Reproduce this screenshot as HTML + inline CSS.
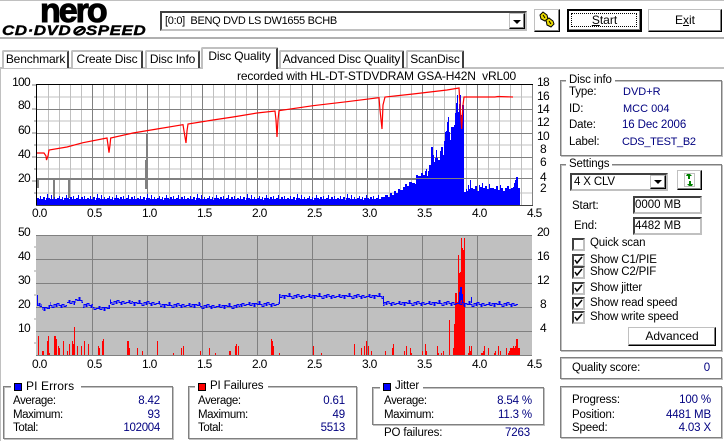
<!DOCTYPE html>
<html><head><meta charset="utf-8"><style>
html,body{margin:0;padding:0;background:#fff}
body{position:relative;width:724px;height:441px;overflow:hidden;font:11.5px/14px "Liberation Sans",sans-serif;letter-spacing:-.15px;color:#000}
.t{position:absolute;white-space:pre;height:14px;line-height:14px}
.a{font-size:12px;letter-spacing:-.7px}
.r{text-align:right}
.n{color:#000080}
.b{position:absolute;box-sizing:border-box}
.g{position:absolute;box-sizing:border-box;border:1px solid #808080;box-shadow:inset 1px 1px 0 #c0c0c0,1px 1px 0 #c0c0c0}
.lg{background:#fff;padding:0 3px}
.btn{position:absolute;box-sizing:border-box;background:#fff;border:1px solid;border-color:#c0c0c0 #000 #000 #c0c0c0;box-shadow:inset -1px -1px 0 #808080;text-align:center;font-size:12px;letter-spacing:0}
.in{position:absolute;box-sizing:border-box;background:#fff;border:2px solid;border-color:#404040 #c0c0c0 #c0c0c0 #404040}
.tab{position:absolute;box-sizing:border-box;background:#fff;border:2px solid #c0c0c0;border-bottom:0;border-right:2px solid #404040;border-radius:2px 2px 0 0;text-align:center;line-height:15px;font-size:12px;letter-spacing:-.15px}
.cb{position:absolute;box-sizing:border-box;width:13px;height:13px;background:#fff;border:2px solid;border-color:#404040 #c0c0c0 #c0c0c0 #404040}
svg{position:absolute}
</style></head><body>
<div class="b" style="left:0;top:0;width:724px;height:1px;background:#c0c0c0"></div>
<div class="b" style="left:0;top:37px;width:724px;height:2px;background:#b0b0b0"></div>
<div class="b" style="left:0;top:67px;width:724px;height:2px;background:#c0c0c0"></div>
<div class="b" style="left:0;top:67px;width:1px;height:374px;background:#c0c0c0"></div>

<div class="t" style="left:40px;top:-1px;height:24px;line-height:24px;font-size:34px;font-weight:bold;letter-spacing:-2px;-webkit-text-stroke:1px #000;color:#000">nero</div>
<div class="t" style="left:2px;top:24px;height:13px;line-height:13px;font-size:13.5px;font-weight:bold;font-style:italic;letter-spacing:.4px;-webkit-text-stroke:.4px #000;transform:scaleX(1.26);transform-origin:0 0">CD·DVD⊘SPEED</div>

<div class="in" style="left:160px;top:11px;width:367px;height:20px"></div>
<div class="t" style="left:165px;top:14px;font-size:11px;letter-spacing:-.3px">[0:0]  BENQ DVD LS DW1655 BCHB</div>
<div class="btn" style="left:509px;top:13px;width:16px;height:16px"></div>
<svg style="left:509px;top:13px" width="16" height="16"><path d="M4 7H12L8 11Z" fill="#000"/></svg>
<div class="btn" style="left:534px;top:9px;width:26px;height:23px"></div>
<svg style="left:534px;top:9px" width="26" height="23"><g fill="#e8d800" stroke="#000" stroke-width="1"><path d="M6 6l3-3 4 3 1 4-3 2-4-2z"/><path d="M12 11l3-2 4 3 1 3-3 3-4-2z"/></g><path d="M9 6l2 3M15 12l2 3" stroke="#000"/></svg>
<div class="btn" style="left:567px;top:9px;width:75px;height:23px;border:2px solid #000;line-height:18px"><div style="position:absolute;left:2px;top:2px;right:3px;bottom:3px;border:1px dotted #000"></div><span style="position:relative;top:0"><u>S</u>tart</span></div>
<div class="btn" style="left:648px;top:9px;width:74px;height:23px;line-height:20px">E<u>x</u>it</div>

<div class="tab" style="left:2px;top:50px;width:67px;height:18px">Benchmark</div>
<div class="tab" style="left:71px;top:50px;width:72px;height:18px">Create Disc</div>
<div class="tab" style="left:145px;top:50px;width:55px;height:18px">Disc Info</div>
<div class="tab" style="left:201px;top:47px;width:77px;height:22px;z-index:2">Disc Quality</div>
<div class="tab" style="left:279px;top:50px;width:125px;height:18px">Advanced Disc Quality</div>
<div class="tab" style="left:406px;top:50px;width:58px;height:18px">ScanDisc</div>

<div class="t" style="left:237px;top:69px;font-size:12px;letter-spacing:-.16px">recorded with HL-DT-STDVDRAM GSA-H42N  vRL00</div>

<svg style="left:0;top:0" width="724" height="441" shape-rendering="crispEdges">
<defs>
<pattern id="nz" patternUnits="userSpaceOnUse" x="37" y="193" width="50" height="13"><path fill="#0000ff" d="M0 13V5H2V6H3V3H4V6H6V4H8V7H9V5H10V1H11V5H13V6H14V2H15V6H17V4H18V6H20V5H22V3H23V6H25V4H26V7H27V5H29V2H30V5H32V6H33V4H35V6H36V3H37V6H39V5H41V2H42V6H44V4H46V6H47V3H48V6H50V13Z"/></pattern>
<pattern id="jt" patternUnits="userSpaceOnUse" x="37" y="0" width="30" height="8"><path fill="none" stroke="#0000ff" d="M0 4.500H2V2.500H3V5.500H5V3.500H7V6.500H8V3.500H10V4.500H12V1.500H13V4.500H15V6.500H17V3.500H19V5.500H20V2.500H22V4.500H24V6.500H25V3.500H27V5.500H29V4.500H30"/></pattern>
</defs>
<!-- top chart grid -->
<g stroke="#c0c0c0" fill="none">
<path d="M37 97H532M37 121H532M37 145H532M37 169H532M37 193H532"/>
<path d="M48.500 85V205M59.500 85V205M70.500 85V205M81.500 85V205M103.500 85V205M114.500 85V205M125.500 85V205M136.500 85V205M158.500 85V205M169.500 85V205M180.500 85V205M191.500 85V205M213.500 85V205M224.500 85V205M235.500 85V205M246.500 85V205M268.500 85V205M279.500 85V205M290.500 85V205M301.500 85V205M323.500 85V205M334.500 85V205M345.500 85V205M356.500 85V205M378.500 85V205M389.500 85V205M400.500 85V205M411.500 85V205M433.500 85V205M444.500 85V205M455.500 85V205M466.500 85V205M488.500 85V205M499.500 85V205M510.500 85V205M521.500 85V205"/>
</g>
<g stroke="#808080" fill="none">
<path d="M37 109.500H532M37 133.500H532M37 157.500H532"/>
<path d="M92.500 85V205M147.500 85V205M202.500 85V205M257.500 85V205M312.500 85V205M367.500 85V205M422.500 85V205M477.500 85V205M532.500 85V205"/>
<path d="M37 178.500H532M37 179.500H462"/>
<path d="M37.500 179V188M38.500 179V188M53.500 179V202M54.500 179V202M68.500 179V198M69.500 179V198M145.500 160V189M146.500 133V189M147.500 133V180"/>
</g>
<rect x="37" y="193" width="346" height="13" fill="url(#nz)"/>
<path fill="#0000ff" d="M383 206V197H385V195H388V197H390V193H392V195H394V191H396V193H398V189H400V190H403V187H405V184H407V186H409V182H412V183H415V184H416V175H418V176H421V173H423V175H425V171H426V169H427V176H428V171H429V165H431V147H433V155H434V162H435V158H436V150H437V158H438V160H440V151H441V147H443V155H444V141H445V132H446V131H447V122H448V117H449V132H450V140H451V127H453V127H454V125H455V113H456V103H457V95H458V112H459V104H460V95H461V115H462V105H464V192H466V189H467V191H468V185H469V189H470V180H471V188H473V189H475V186H477V191H479V185H480V187H482V183H483V188H485V186H487V189H489V184H490V188H492V188H494V189H496V186H498V190H500V185H501V188H503V191H505V188H507V186H509V189H511V188H513V187H514V183H515V180H516V177H518V188H520V206Z"/>
<path d="M408 178.500H464" stroke="#808080" fill="none"/>
<path fill="none" stroke="#ff0000" stroke-width="1.200" shape-rendering="auto" d="M37 153H44L46 156L46.500 160L48 156L49 150L67 147L83 142.700L107 138L108 145L109 152.700L110 145L110.700 138L133 133L157 129L183 124.700L184 131L186 143L187 131L188 124L213 120L233 117L257 113L275 111L276 120L277 137L278 120L279 110.700L313 105.700L347 101.700L379 97.700L380 110L382 129L383 105L385 97L413 94L447 90L459 88L460 105L461.700 129L463 105L464 97H476L495 97L498 96.500L513 97"/>
<path d="M36 84.500H533" stroke="#000" fill="none"/>
<path d="M36.500 84V206" stroke="#000" fill="none"/>
<path d="M36 205.500H533" stroke="#404040" fill="none"/>
<path d="M32 85H36M32 109H36M32 133H36M32 157H36M32 181H36M34 97H36M34 121H36M34 145H36M34 169H36M34 193H36" stroke="#808080" fill="none"/>

<!-- bottom chart -->
<rect x="36" y="235" width="496" height="120" fill="#c0c0c0"/>
<g stroke="#808080" fill="none">
<path d="M36 235.500H532M36 259.500H532M36 283.500H532M36 307.500H532M36 331.500H532M36 355.500H532"/>
<path d="M92.500 235V355M147.500 235V355M202.500 235V355M257.500 235V355M312.500 235V355M367.500 235V355M422.500 235V355M477.500 235V355"/>
<path d="M34 247H36M34 271H36M34 295H36M34 319H36M34 343H36" stroke="#a0a0a0"/>
</g>
<path stroke="#ff0000" fill="none" d="M38.500 355V336M42.500 355V351M43.500 355V351M47.500 355V341M48.500 355V336M49.500 355V353M54.500 355V336M55.500 355V336M56.500 355V339M58.500 355V346M59.500 355V348M63.500 355V341M67.500 355V351M69.500 355V344M72.500 355V341M73.500 355V344M74.500 355V327M77.500 355V346M81.500 355V346M84.500 355V341M88.500 355V344M98.500 355V346M99.500 355V348M102.500 355V341M103.500 355V339M127.500 355V341M128.500 355V341M129.500 355V348M137.500 355V348M142.500 355V351M157.500 355V341M173.500 355V353M181.500 355V348M183.500 355V346M200.500 355V351M209.500 355V348M215.500 355V353M229.500 355V351M230.500 355V351M235.500 355V346M236.500 355V344M238.500 355V346M271.500 355V339M272.500 355V341M273.500 355V346M279.500 355V353M313.500 355V346M321.500 355V353M354.500 355V344M361.500 355V348M364.500 355V346M366.500 355V341M368.500 355V346M371.500 355V351M385.500 355V351M392.500 355V348M393.500 355V344M404.500 355V351M406.500 355V346M410.500 355V348M411.500 355V353M422.500 355V351M425.500 355V344M426.500 355V351M437.500 355V346M438.500 355V353M441.500 355V353M443.500 355V351M449.500 355V320M453.500 355V348M454.500 355V324M455.500 355V293M456.500 355V293M457.500 355V302M458.500 355V255M459.500 355V273M460.500 355V272M461.500 355V238M462.500 355V248M463.500 355V250M464.500 355V238M468.500 355V353M469.500 355V346M470.500 355V351M471.500 355V346M481.500 355V353M482.500 355V353M483.500 355V351M484.500 355V346M488.500 355V348M494.500 355V353M495.500 355V351M498.500 355V346M500.500 355V351M506.500 355V348M508.500 355V353M509.500 355V351M510.500 355V348M511.500 355V348M512.500 355V348M513.500 355V346M514.500 355V348M515.500 355V346M516.500 355V339M517.500 355V339M518.500 355V348M519.500 355V348"/>
<!-- jitter trace -->
<g transform="translate(0,301)"><rect x="37" width="5" height="8" fill="url(#jt)"/></g>
<g transform="translate(0,304)"><rect x="42" width="8" height="8" fill="url(#jt)"/></g>
<g transform="translate(0,301)"><rect x="50" width="17" height="8" fill="url(#jt)"/></g>
<g transform="translate(0,298)"><rect x="67" width="8" height="8" fill="url(#jt)"/></g>
<g transform="translate(0,296)"><rect x="75" width="8" height="8" fill="url(#jt)"/></g>
<g transform="translate(0,301)"><rect x="83" width="10" height="8" fill="url(#jt)"/></g>
<g transform="translate(0,304)"><rect x="93" width="17" height="8" fill="url(#jt)"/></g>
<g transform="translate(0,298)"><rect x="110" width="23" height="8" fill="url(#jt)"/></g>
<g transform="translate(0,299)"><rect x="133" width="27" height="8" fill="url(#jt)"/></g>
<g transform="translate(0,301)"><rect x="160" width="40" height="8" fill="url(#jt)"/></g>
<g transform="translate(0,302)"><rect x="200" width="40" height="8" fill="url(#jt)"/></g>
<g transform="translate(0,300)"><rect x="240" width="39" height="8" fill="url(#jt)"/></g>
<g transform="translate(0,292)"><rect x="279" width="104" height="8" fill="url(#jt)"/></g>
<g transform="translate(0,299)"><rect x="383" width="81" height="8" fill="url(#jt)"/></g>
<g transform="translate(0,300)"><rect x="464" width="54" height="8" fill="url(#jt)"/></g>
<path stroke="#0000ff" fill="none" d="M37.500 295V306M110.500 300V304M279.500 296V304M383.500 296V304M459.500 292V302M460.500 287V301M461.500 287V300M462.500 294V302M471.500 297V303"/>
</svg>

<!-- axis labels top -->
<div class="t r a" style="right:694px;top:75px">100</div>
<div class="t r a" style="right:694px;top:98px">80</div>
<div class="t r a" style="right:694px;top:123px">60</div>
<div class="t r a" style="right:694px;top:147px">40</div>
<div class="t r a" style="right:694px;top:171px">20</div>
<div class="t a" style="left:537px;top:75px">18</div>
<div class="t a" style="left:537px;top:89px">16</div>
<div class="t a" style="left:537px;top:102px">14</div>
<div class="t a" style="left:537px;top:115px">12</div>
<div class="t a" style="left:537px;top:129px">10</div>
<div class="t a" style="left:540px;top:142px">8</div>
<div class="t a" style="left:540px;top:155px">6</div>
<div class="t a" style="left:540px;top:170px">4</div>
<div class="t a" style="left:540px;top:181px">2</div>
<div class="t a" style="left:32px;top:206px">0.0</div>
<div class="t a" style="left:87px;top:206px">0.5</div>
<div class="t a" style="left:142px;top:206px">1.0</div>
<div class="t a" style="left:197px;top:206px">1.5</div>
<div class="t a" style="left:252px;top:206px">2.0</div>
<div class="t a" style="left:307px;top:206px">2.5</div>
<div class="t a" style="left:362px;top:206px">3.0</div>
<div class="t a" style="left:417px;top:206px">3.5</div>
<div class="t a" style="left:472px;top:206px">4.0</div>
<div class="t a" style="left:527px;top:206px">4.5</div>

<!-- axis labels bottom -->
<div class="t r a" style="right:694px;top:225px">50</div>
<div class="t r a" style="right:694px;top:249px">40</div>
<div class="t r a" style="right:694px;top:273px">30</div>
<div class="t r a" style="right:694px;top:297px">20</div>
<div class="t r a" style="right:694px;top:321px">10</div>
<div class="t a" style="left:537px;top:225px">20</div>
<div class="t a" style="left:537px;top:249px">16</div>
<div class="t a" style="left:537px;top:273px">12</div>
<div class="t a" style="left:540px;top:297px">8</div>
<div class="t a" style="left:540px;top:321px">4</div>
<div class="t a" style="left:32px;top:357px">0.0</div>
<div class="t a" style="left:87px;top:357px">0.5</div>
<div class="t a" style="left:142px;top:357px">1.0</div>
<div class="t a" style="left:197px;top:357px">1.5</div>
<div class="t a" style="left:252px;top:357px">2.0</div>
<div class="t a" style="left:307px;top:357px">2.5</div>
<div class="t a" style="left:362px;top:357px">3.0</div>
<div class="t a" style="left:417px;top:357px">3.5</div>
<div class="t a" style="left:472px;top:357px">4.0</div>
<div class="t a" style="left:527px;top:357px">4.5</div>

<!-- Disc info -->
<div class="g" style="left:560px;top:80px;width:162px;height:76px"></div>
<div class="t lg" style="left:566px;top:73px">Disc info</div>
<div class="t" style="left:569px;top:85px">Type:</div><div class="t n" style="left:623px;top:85px;font-size:11px;letter-spacing:0">DVD+R</div>
<div class="t" style="left:569px;top:102px">ID:</div><div class="t n" style="left:623px;top:102px;font-size:11px;letter-spacing:0">MCC 004</div>
<div class="t" style="left:569px;top:118px">Date:</div><div class="t n" style="left:622px;top:118px;letter-spacing:-.1px">16 Dec 2006</div>
<div class="t" style="left:569px;top:135px">Label:</div><div class="t n" style="left:622px;top:135px;font-size:11px;letter-spacing:-.3px">CDS_TEST_B2</div>

<!-- Settings -->
<div class="g" style="left:560px;top:164px;width:162px;height:187px"></div>
<div class="t lg" style="left:566px;top:157px">Settings</div>
<div class="in" style="left:570px;top:173px;width:98px;height:18px"></div>
<div class="t" style="left:574px;top:175px">4 X CLV</div>
<div class="btn" style="left:650px;top:175px;width:16px;height:14px"></div>
<svg style="left:650px;top:175px" width="16" height="14"><path d="M4 5H12L8 9Z" fill="#000"/></svg>
<div class="btn" style="left:677px;top:170px;width:25px;height:20px"></div>
<svg style="left:677px;top:170px" width="25" height="20"><rect x="7.500" y="3.500" width="10" height="13" fill="none" stroke="#808080" stroke-dasharray="1 1"/><path d="M10 4h3l2 2-2 0v3h-2V6h-2zM15 16h-3l-2-2 2 0v-3h2v3h2z" fill="#008000"/></svg>
<div class="t" style="left:572px;top:199px">Start:</div>
<div class="in" style="left:633px;top:196px;width:69px;height:18px"></div>
<div class="t" style="left:635px;top:198px;letter-spacing:0">0000 MB</div>
<div class="t" style="left:574px;top:219px">End:</div>
<div class="in" style="left:633px;top:217px;width:69px;height:18px"></div>
<div class="t" style="left:635px;top:219px;letter-spacing:0">4482 MB</div>
<div class="cb" style="left:572px;top:238px"></div><div class="t" style="left:590px;top:236px">Quick scan</div>
<div class="cb" style="left:572px;top:254px"></div><div class="t" style="left:590px;top:253px">Show C1/PIE</div>
<div class="cb" style="left:572px;top:266px"></div><div class="t" style="left:590px;top:265px">Show C2/PIF</div>
<div class="cb" style="left:572px;top:282px"></div><div class="t" style="left:590px;top:281px">Show jitter</div>
<div class="cb" style="left:572px;top:297px"></div><div class="t" style="left:590px;top:296px">Show read speed</div>
<div class="cb" style="left:572px;top:311px"></div><div class="t" style="left:590px;top:310px">Show write speed</div>
<svg style="left:572px;top:254px" width="14" height="72" fill="none" stroke="#000" stroke-width="1.500"><path d="M3 6l2 3 5-6M3 18l2 3 5-6M3 34l2 3 5-6M3 49l2 3 5-6M3 63l2 3 5-6"/></svg>
<div class="btn" style="left:628px;top:327px;width:88px;height:19px;line-height:16px">Advanced</div>

<!-- Quality -->
<div class="g" style="left:560px;top:357px;width:162px;height:22px"></div>
<div class="t" style="left:572px;top:361px">Quality score:</div>
<div class="t r n" style="right:14px;top:361px">0</div>

<!-- Progress -->
<div class="g" style="left:560px;top:386px;width:162px;height:52px"></div>
<div class="t" style="left:572px;top:393px">Progress:</div><div class="t r n" style="right:13px;top:393px">100 %</div>
<div class="t" style="left:572px;top:408px">Position:</div><div class="t r n" style="right:13px;top:408px">4481 MB</div>
<div class="t" style="left:572px;top:421px">Speed:</div><div class="t r n" style="right:13px;top:421px">4.03 X</div>

<!-- PI Errors -->
<div class="g" style="left:3px;top:386px;width:170px;height:53px"></div>
<div class="b" style="left:11px;top:380px;width:70px;height:12px;background:#fff"></div>
<div class="b" style="left:14px;top:383px;width:8px;height:8px;background:#0000ff;border:1px solid #000"></div>
<div class="t" style="left:26px;top:379px;font-size:12px;letter-spacing:.1px">PI Errors</div>
<div class="t" style="left:13px;top:394px;letter-spacing:-.4px">Average:</div><div class="t r n" style="right:564px;top:394px">8.42</div>
<div class="t" style="left:13px;top:408px;letter-spacing:-.4px">Maximum:</div><div class="t r n" style="right:564px;top:408px">93</div>
<div class="t" style="left:13px;top:421px;letter-spacing:-.4px">Total:</div><div class="t r n" style="right:564px;top:421px;letter-spacing:-.3px">102004</div>

<!-- PI Failures -->
<div class="g" style="left:188px;top:386px;width:169px;height:53px"></div>
<div class="b" style="left:195px;top:380px;width:73px;height:12px;background:#fff"></div>
<div class="b" style="left:198px;top:383px;width:8px;height:8px;background:#ff0000;border:1px solid #000"></div>
<div class="t" style="left:210px;top:379px">PI Failures</div>
<div class="t" style="left:198px;top:394px;letter-spacing:-.4px">Average:</div><div class="t r n" style="right:379px;top:394px">0.61</div>
<div class="t" style="left:198px;top:408px;letter-spacing:-.4px">Maximum:</div><div class="t r n" style="right:379px;top:408px">49</div>
<div class="t" style="left:198px;top:421px;letter-spacing:-.4px">Total:</div><div class="t r n" style="right:379px;top:421px;letter-spacing:-.3px">5513</div>

<!-- Jitter -->
<div class="g" style="left:372px;top:387px;width:172px;height:38px"></div>
<div class="b" style="left:380px;top:381px;width:43px;height:12px;background:#fff"></div>
<div class="b" style="left:383px;top:383px;width:8px;height:8px;background:#0000ff;border:1px solid #000"></div>
<div class="t" style="left:395px;top:379px">Jitter</div>
<div class="t" style="left:384px;top:394px;letter-spacing:-.4px">Average:</div><div class="t r n" style="right:192px;top:394px">8.54 %</div>
<div class="t" style="left:384px;top:408px;letter-spacing:-.4px">Maximum:</div><div class="t r n" style="right:192px;top:408px">11.3 %</div>
<div class="t" style="left:384px;top:426px">PO failures:</div><div class="t r n" style="right:194px;top:426px">7263</div>
</body></html>
